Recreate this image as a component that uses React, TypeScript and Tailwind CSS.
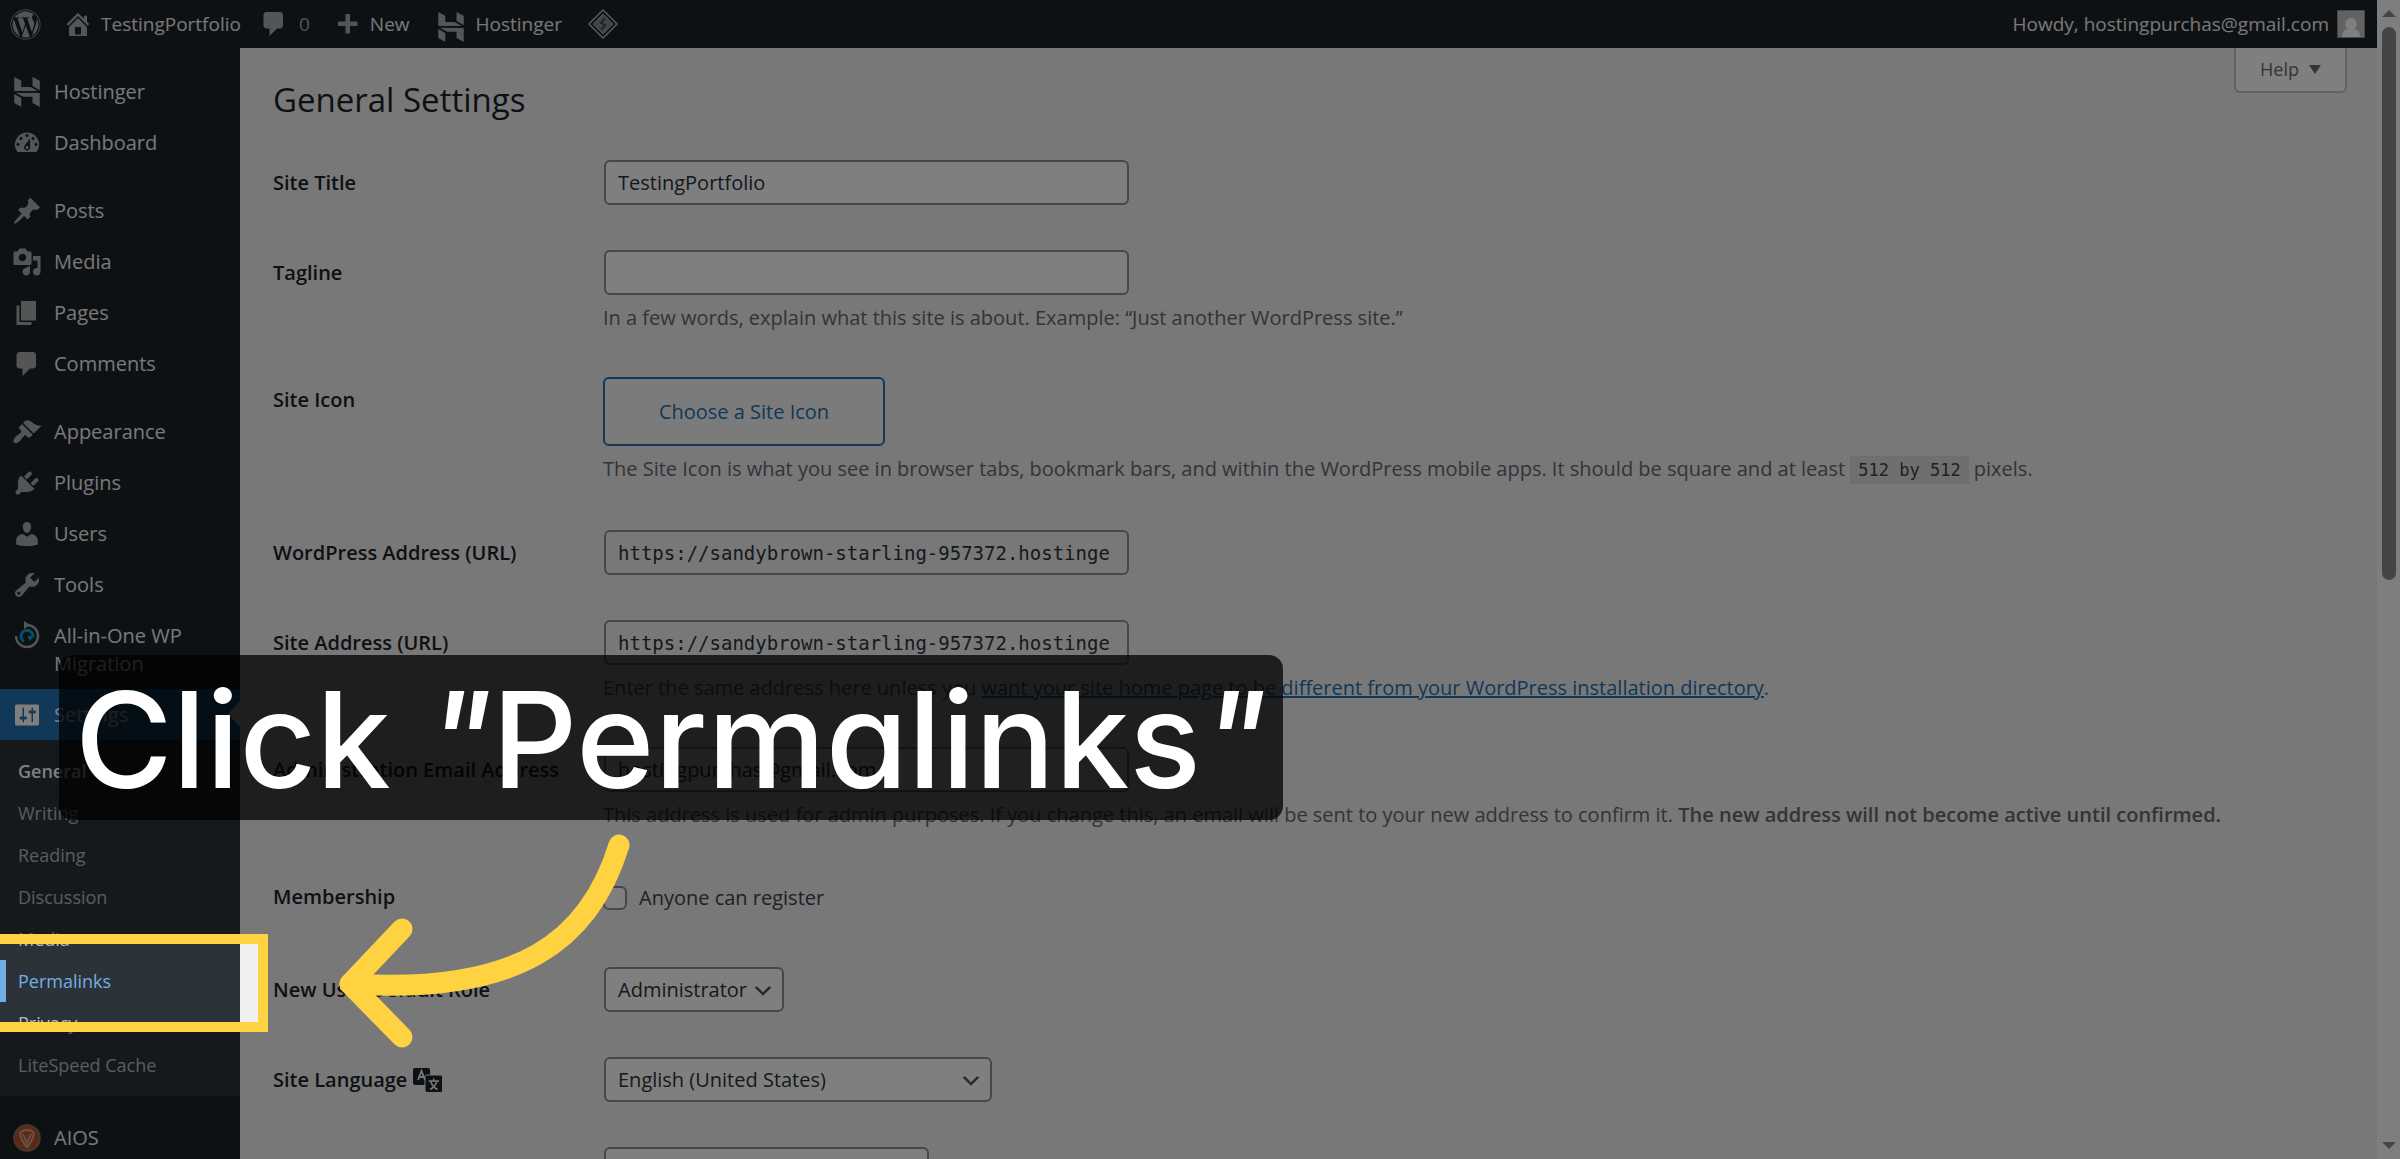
import { useState } from 'react';
import type { ReactNode } from 'react';
import { FaWordpress } from 'react-icons/fa';
import { SiHostinger } from 'react-icons/si';
import clsx from 'clsx';

const SITE_URL = 'https://sandybrown-starling-957372.hostingersite.com';

const dashicons = {
  home: 'M16 8.5l1.53 1.53-1.06 1.06L10 4.6l-6.47 6.49-1.06-1.06L10 2.5l4 4v-2h2v4zm-6-2.46l6 5.99V18H4v-5.97zM12 17v-5H8v5h4z',
  comments: 'M5 2h9q.82 0 1.41.59T16 4v7q0 .82-.59 1.41T14 13h-2l-5 5v-5H5q-.82 0-1.41-.59T3 11V4q0-.82.59-1.41T5 2z',
  plus: 'M17 7v3h-5v5H9v-5H4V7h5V2h3v5h5z',
  dashboard:
    'M3.76 16h12.48A7.998 7.998 0 0 0 10 3a7.998 7.998 0 0 0-6.24 13zM10 4c.55 0 1 .45 1 1s-.45 1-1 1-1-.45-1-1 .45-1 1-1zM6 6c.55 0 1 .45 1 1s-.45 1-1 1-1-.45-1-1 .45-1 1-1zm8 0c.55 0 1 .45 1 1s-.45 1-1 1-1-.45-1-1 .45-1 1-1zm-5.37 5.55L12 7v6c0 1.1-.9 2-2 2s-2-.9-2-2c0-.57.24-1.08.63-1.45zM4 10c.55 0 1 .45 1 1s-.45 1-1 1-1-.45-1-1 .45-1 1-1zm12 0c.55 0 1 .45 1 1s-.45 1-1 1-1-.45-1-1 .45-1 1-1zm-5 3c0-.55-.45-1-1-1s-1 .45-1 1 .45 1 1 1 1-.45 1-1z',
  posts:
    'M10.44 3.02l1.82-1.82 6.36 6.35-1.83 1.82c-1.05-.68-2.48-.57-3.41.36l-.75.75c-.92.93-1.04 2.35-.35 3.41l-1.83 1.82-2.41-2.41-2.8 2.79c-.42.42-3.38 2.71-3.8 2.29s1.86-3.39 2.28-3.81l2.79-2.79L4.1 9.36l1.83-1.82c1.05.69 2.48.57 3.4-.36l.75-.75c.93-.92 1.05-2.35.36-3.41z',
  media:
    'M13 11V4c0-.55-.45-1-1-1h-1.67L9 1H5L3.67 3H2c-.55 0-1 .45-1 1v7c0 .55.45 1 1 1h10c.55 0 1-.45 1-1zM7 4.5c1.38 0 2.5 1.12 2.5 2.5S8.38 9.5 7 9.5 4.5 8.38 4.5 7 5.62 4.5 7 4.5zM14 6h5v10.5c0 1.38-1.12 2.5-2.5 2.5S14 17.88 14 16.5s1.12-2.5 2.5-2.5c.17 0 .34.02.5.05V9h-3V6zm-4 8.05V13h2v3.5c0 1.38-1.12 2.5-2.5 2.5S7 17.88 7 16.5 8.12 14 9.5 14c.17 0 .34.02.5.05z',
  pages: 'M6 15V2h10v13H6zm-1 1h8v2H3V5h2v11z',
  appearance:
    'M14.48 11.06L7.41 3.99l1.5-1.5c.5-.56 2.3-.47 3.51.32 1.21.8 1.43 1.28 2.91 2.1 1.18.64 2.45 1.26 4.45.85zm-.71.71L6.7 4.7 4.93 6.47c-.39.39-.39 1.02 0 1.41l1.06 1.06c.39.39.39 1.03 0 1.42-.6.6-1.43 1.11-2.21 1.69-.35.26-.7.53-1.01.84C1.43 14.23.4 16.08 1.4 17.07c.99 1 2.84-.03 4.18-1.36.31-.31.58-.66.85-1.02.57-.78 1.08-1.61 1.69-2.21.39-.39 1.02-.39 1.41 0l1.06 1.06c.39.39 1.02.39 1.41 0z',
  plugins:
    'M13.11 4.36L9.87 7.6 8 5.73l3.24-3.24c.35-.34 1.05-.2 1.56.32.52.51.66 1.21.31 1.55zm-8 1.77l.91-1.12 9.01 9.01-1.19.84c-.71.71-2.63 1.16-3.82 1.16H6.14L4.9 17.26c-.59.59-1.54.59-2.12 0-.59-.58-.59-1.53 0-2.12l1.24-1.24v-3.88c0-1.13.4-3.19 1.09-3.89zm7.26 3.97l3.24-3.24c.34-.35 1.04-.21 1.55.31.52.51.66 1.21.31 1.55l-3.24 3.25z',
  users:
    'M10 9.25c-2.27 0-2.73-3.44-2.73-3.44C7 4.02 7.82 2 9.97 2c2.16 0 2.98 2.02 2.71 3.81 0 0-.41 3.44-2.68 3.44zm0 2.57L12.72 10c2.39 0 4.52 2.33 4.52 4.53v2.49s-3.65 1.13-7.24 1.13c-3.65 0-7.24-1.13-7.24-1.13v-2.49c0-2.25 1.94-4.48 4.47-4.48z',
  tools:
    'M16.68 9.77c-1.34 1.34-3.3 1.67-4.95.99l-5.41 6.52c-.99.99-2.59.99-3.58 0s-.99-2.59 0-3.57l6.52-5.42c-.68-1.65-.35-3.61.99-4.95 1.28-1.28 3.12-1.62 4.72-1.06l-2.89 2.89 2.82 2.82 2.86-2.87c.53 1.58.18 3.39-1.08 4.65zM3.81 16.21c.4.39 1.04.39 1.43 0 .4-.4.4-1.04 0-1.43-.39-.4-1.03-.4-1.43 0-.39.39-.39 1.03 0 1.43z',
  settings:
    'M18 16V4c0-.55-.45-1-1-1H3c-.55 0-1 .45-1 1v12c0 .55.45 1 1 1h14c.55 0 1-.45 1-1zM8 11h1c.55 0 1 .45 1 1s-.45 1-1 1H8v1.5c0 .28-.22.5-.5.5s-.5-.22-.5-.5V13H6c-.55 0-1-.45-1-1s.45-1 1-1h1V5.5c0-.28.22-.5.5-.5s.5.22.5.5V11zm5-2h-1c-.55 0-1-.45-1-1s.45-1 1-1h1V5.5c0-.28.22-.5.5-.5s.5.22.5.5V7h1c.55 0 1 .45 1 1s-.45 1-1 1h-1v5.5c0 .28-.22.5-.5.5s-.5-.22-.5-.5V9z',
};

type DashiconName = keyof typeof dashicons;

function Dashicon({ name, className }: { name: DashiconName; className?: string }) {
  return (
    <svg viewBox="0 0 20 20" aria-hidden="true" className={clsx('size-[30px] shrink-0 fill-current', className)}>
      <path d={dashicons[name]} />
    </svg>
  );
}

function MigrationIcon() {
  return (
    <svg viewBox="0 0 30 30" aria-hidden="true" className="size-[30px] shrink-0" fill="none" strokeWidth="2.4">
      <path d="M15 4a11 11 0 1 1-11 11" stroke="#a7aaad" />
      <path d="M12 0l6 4-6 4z" fill="#a7aaad" />
      <path d="M12 20.500a6 6 0 1 1 9-5" stroke="#00a0e0" strokeWidth="3" />
      <path d="M15 15h7l-4 5z" fill="#00a0e0" />
    </svg>
  );
}

function AiosIcon() {
  return (
    <svg viewBox="0 0 30 30" aria-hidden="true" className="size-[30px] shrink-0" fill="none">
      <circle cx="15" cy="15" r="13" fill="#b8522a" stroke="#8f7468" strokeWidth="1.500" />
      <path d="M8 10c3-4 11-4 14 0-1 6-3 10-7 14-4-4-6-8-7-14z" stroke="#d0a694" strokeWidth="2" />
      <path d="M11 11l4 9 4-9" stroke="#d0a694" strokeWidth="1.800" />
    </svg>
  );
}

function LiteSpeedIcon() {
  return (
    <svg viewBox="0 0 30 30" aria-hidden="true" className="size-[30px] shrink-0" fill="none" stroke="#a7aaad">
      <path d="M15 1l14 14-14 14L1 15z" strokeWidth="1.600" />
      <path d="M15 5l10 10-10 10L5 15z" fill="#83878b" />
      <path d="M17 9l-4 5 4 2-4 5" stroke="#3a4046" strokeWidth="1.800" />
    </svg>
  );
}

function TranslationIcon() {
  return (
    <svg viewBox="0 0 30 26" aria-hidden="true" className="h-[26px] w-[30px]" fill="none">
      <rect x="0" y="1" width="17" height="17" rx="2" fill="#1d2327" />
      <path d="M5 13l3.500-9 3.500 9M6 10h5" stroke="#f0f0f1" strokeWidth="1.800" />
      <rect x="12" y="8" width="17.500" height="17.500" rx="2" fill="#1d2327" stroke="#f0f0f1" />
      <path d="M15.500 14h10.500M20.700 11.500v2.500M17 22.500c4-2 6-5 7-8.500M24.500 22.500c-4-2-6-5-7-8.500" stroke="#f0f0f1" strokeWidth="1.500" />
    </svg>
  );
}

const menuGroups: { label: string; icon: ReactNode }[][] = [
  [
    { label: 'Hostinger', icon: <SiHostinger className="size-[30px] shrink-0" /> },
    { label: 'Dashboard', icon: <Dashicon name="dashboard" /> },
  ],
  [
    { label: 'Posts', icon: <Dashicon name="posts" /> },
    { label: 'Media', icon: <Dashicon name="media" /> },
    { label: 'Pages', icon: <Dashicon name="pages" /> },
    { label: 'Comments', icon: <Dashicon name="comments" /> },
  ],
  [
    { label: 'Appearance', icon: <Dashicon name="appearance" /> },
    { label: 'Plugins', icon: <Dashicon name="plugins" /> },
    { label: 'Users', icon: <Dashicon name="users" /> },
    { label: 'Tools', icon: <Dashicon name="tools" /> },
    { label: 'All-in-One WP Migration', icon: <MigrationIcon /> },
  ],
];

const settingsPages = ['General', 'Writing', 'Reading', 'Discussion', 'Media', 'Permalinks', 'Privacy', 'LiteSpeed Cache'];

function MenuItem({ label, icon }: { label: string; icon: ReactNode }) {
  return (
    <a href="#" className="flex gap-3 py-[11px] pr-8 pl-3 leading-[28px] text-[#f0f0f1]">
      <span className="-my-px text-[#a7aaad]">{icon}</span>
      <span>{label}</span>
    </a>
  );
}

function AdminBar() {
  return (
    <header className="flex h-12 items-center bg-[#1d2327] pr-3 pl-2.5 text-[19px] text-[#f0f0f1]">
      <a href="#" aria-label="About WordPress"><FaWordpress className="size-[31px] text-[#a7aaad]" /></a>
      <a href="#" className="ml-[22px] flex items-center gap-2">
        <Dashicon name="home" className="text-[#a7aaad]" />
        TestingPortfolio
      </a>
      <a href="#" className="ml-[18px] flex items-center gap-2.5 text-[#a7aaad]">
        <Dashicon name="comments" />
        0
      </a>
      <a href="#" className="ml-[22px] flex items-center gap-2">
        <Dashicon name="plus" className="mt-1 text-[#a7aaad]" />
        New
      </a>
      <a href="#" className="ml-[26px] flex items-center gap-2.5">
        <SiHostinger className="mt-1.5 size-[30px] text-[#a7aaad]" />
        Hostinger
      </a>
      <a href="#" aria-label="LiteSpeed Cache" className="ml-[26px]"><LiteSpeedIcon /></a>
      <a href="#" className="ml-auto flex items-center gap-2">
        Howdy, hostingpurchas@gmail.com
        <svg viewBox="0 0 28 28" aria-hidden="true" className="size-7">
          <path d="M0 0h28v28H0z" fill="#8c8f94" />
          <path d="M1 1h26v26H1z" fill="#c3c4c7" />
          <path d="M14 8a6 6 0 0 1 3 11c4 0 6 3 6 8H5c0-5 2-8 6-8a6 6 0 0 1 3-11z" fill="#fff" />
        </svg>
      </a>
    </header>
  );
}

function Sidebar() {
  return (
    <nav aria-label="Main menu" className="w-60 shrink-0 bg-[#1d2327] pt-[19px]">
      {menuGroups.map((group, index) => (
        <div key={index} className={clsx(index > 0 && 'mt-[17px]')}>
          {group.map((item) => (
            <div key={item.label} className="min-h-[51px]">
              <MenuItem {...item} />
            </div>
          ))}
        </div>
      ))}

      <a href="#" className="relative flex h-[51px] items-center gap-3 bg-[#2271b1] pl-3 text-white">
        <Dashicon name="settings" />
        Settings
        <span className="absolute top-3 right-0 border-y-[13px] border-r-[12px] border-y-transparent border-r-[#f0f0f1]" />
      </a>
      <ul className="bg-[#2c3338] py-2.5 text-[18px] leading-[42px]">
        {settingsPages.map((page) => (
          <li key={page}>
            <a
              href="#"
              className={clsx(
                'block pl-[18px]',
                page === 'General' && 'font-semibold text-white',
                page === 'Permalinks' && 'text-[#72aee6] shadow-[inset_6px_0_0_#72aee6]',
                page !== 'General' && page !== 'Permalinks' && 'text-[#b4b9be]'
              )}
            >
              {page}
            </a>
          </li>
        ))}
      </ul>
      <div className="mt-[17px]">
        <MenuItem label="AIOS" icon={<AiosIcon />} />
      </div>
    </nav>
  );
}

interface FieldRowProps {
  label: string;
  htmlFor: string;
  icon?: ReactNode;
  children: ReactNode;
}

function FieldRow({ label, htmlFor, icon, children }: FieldRowProps) {
  return (
    <div className="flex">
      <label htmlFor={htmlFor} className="flex h-[58px] w-[330px] shrink-0 items-center gap-1.5 pt-[31px] leading-[27px] font-semibold text-[#1d2327]">
        {label}
        {icon}
      </label>
      <div className="pt-[22px] pb-[23px]">{children}</div>
    </div>
  );
}

const fieldClass = 'ml-px block h-[45px] rounded-md border-2 border-[#8c8f94] pl-3 text-[#2c3338]';

function Description({ children }: { children: ReactNode }) {
  return <p className="mt-2 leading-[29px] text-[#646970]">{children}</p>;
}

function SelectBox({ id, value, className }: { id: string; value: string; className: string }) {
  return (
    <div className={clsx('relative', className)}>
      <select id={id} className={clsx(fieldClass, 'w-full appearance-none bg-white')}>
        <option>{value}</option>
      </select>
      <svg viewBox="0 0 20 20" aria-hidden="true" className="pointer-events-none absolute top-3 right-2 size-6 fill-[#50575e]">
        <path d="M5 6l5 5 5-5 2 1-7 7-7-7 2-1z" />
      </svg>
    </div>
  );
}

function UrlInput({ id }: { id: string }) {
  return (
    <input
      id={id}
      readOnly
      value={SITE_URL}
      className={clsx(fieldClass, "w-[525px] bg-transparent pr-[18px] font-['DejaVu_Sans_Mono',monospace] text-[19px]")}
    />
  );
}

function SettingsForm() {
  const [title, setTitle] = useState('TestingPortfolio');
  const [tagline, setTagline] = useState('');
  const [email, setEmail] = useState('hostingpurchas@gmail.com');

  return (
    <form>
      <FieldRow label="Site Title" htmlFor="blogname">
        <input id="blogname" value={title} onChange={(e) => setTitle(e.target.value)} className={clsx(fieldClass, 'w-[525px] bg-white')} />
      </FieldRow>
      <FieldRow label="Tagline" htmlFor="tagline">
        <input id="tagline" value={tagline} onChange={(e) => setTagline(e.target.value)} className={clsx(fieldClass, 'w-[525px] bg-white')} />
        <Description>In a few words, explain what this site is about. Example: “Just another WordPress site.”</Description>
      </FieldRow>
      <FieldRow label="Site Icon" htmlFor="site-icon">
        <button id="site-icon" type="button" className="block h-[69px] w-[282px] rounded-md border-2 border-[#2271b1] bg-[#f6f7f7] text-[#2271b1]">
          Choose a Site Icon
        </button>
        <Description>
          The Site Icon is what you see in browser tabs, bookmark bars, and within the WordPress mobile apps. It should be square and at least{' '}
          <code className="bg-[#dfdfe0] px-2 py-1 font-['DejaVu_Sans_Mono',monospace] text-[17px] text-[#3c434a]">512 by 512</code> pixels.
        </Description>
      </FieldRow>
      <FieldRow label="WordPress Address (URL)" htmlFor="siteurl">
        <UrlInput id="siteurl" />
      </FieldRow>
      <FieldRow label="Site Address (URL)" htmlFor="home">
        <UrlInput id="home" />
        <Description>
          Enter the same address here unless you{' '}
          <a href="#" className="text-[#2271b1] underline">want your site home page to be different from your WordPress installation directory</a>.
        </Description>
      </FieldRow>
      <FieldRow label="Administration Email Address" htmlFor="admin-email">
        <input id="admin-email" type="email" value={email} onChange={(e) => setEmail(e.target.value)} className={clsx(fieldClass, 'w-[525px] bg-white')} />
        <Description>
          This address is used for admin purposes. If you change this, an email will be sent to your new address to confirm it.{' '}
          <strong className="font-semibold">The new address will not become active until confirmed.</strong>
        </Description>
      </FieldRow>
      <FieldRow label="Membership" htmlFor="register">
        <label className="flex h-12 items-center gap-3 text-[#3c434a]">
          <input id="register" type="checkbox" className="size-6 appearance-none rounded-md border-2 border-[#8c8f94] bg-white" />
          Anyone can register
        </label>
      </FieldRow>
      <FieldRow label="New User Default Role" htmlFor="role">
        <SelectBox id="role" value="Administrator" className="w-[180px]" />
      </FieldRow>
      <FieldRow label="Site Language" htmlFor="language" icon={<TranslationIcon />}>
        <SelectBox id="language" value="English (United States)" className="w-[388px]" />
      </FieldRow>
      <FieldRow label="" htmlFor="timezone">
        <SelectBox id="timezone" value="UTC+0" className="w-[325px]" />
      </FieldRow>
    </form>
  );
}

function Scrollbar() {
  return (
    <div className="flex w-[23px] shrink-0 flex-col items-center justify-between bg-[#fcfcfc] pt-2.5 pb-2.5">
      <div>
        <div className="mb-2.5 border-x-[7px] border-b-[7px] border-x-transparent border-b-[#8b8b8b]" />
        <div className="h-[553px] w-3.5 rounded-full bg-[#8b8b8b]" />
      </div>
      <div className="border-x-[7px] border-t-[7px] border-x-transparent border-t-[#8b8b8b]" />
    </div>
  );
}

export default function App() {
  return (
    <div className="relative flex h-screen overflow-hidden bg-[#f0f0f1] font-['Open_Sans',sans-serif] text-[20px]">
      <div className="flex min-w-0 flex-1 flex-col">
        <AdminBar />
        <div className="flex min-h-0 flex-1">
          <Sidebar />
          <main className="relative flex-1 pl-[33px]">
            <button type="button" className="absolute top-0 right-[30px] flex h-[45px] items-center gap-2.5 rounded-b-md border-2 border-t-0 border-[#c3c4c7] bg-white px-6 text-[18px] text-[#646970]">
              Help
              <span className="border-x-[6px] border-t-[9px] border-x-transparent border-t-[#646970]" />
            </button>
            <h1 className="pt-[30px] pb-4 text-[33px] leading-[44px] text-[#1d2327]">General Settings</h1>
            <SettingsForm />
          </main>
        </div>
      </div>
      <Scrollbar />

      {/* Spotlight: the huge shadow dims everything around the box */}
      <div className="absolute top-[934px] -left-2.5 h-[98px] w-[278px] border-10 border-[#ffd242] shadow-[0_0_0_2400px_rgba(0,0,0,0.5)]" />
      <div className="absolute top-[655px] left-[59px] flex h-[165px] items-center rounded-[14px] bg-black/75 px-4 pt-1 font-['Inter',sans-serif] text-[133px] font-medium whitespace-pre text-white [font-feature-settings:'cv11']">
        Click <i>"</i>Permalinks<i>"</i>
      </div>
      <svg viewBox="0 0 320 240" aria-hidden="true" className="absolute top-[818px] left-[320px] h-[240px] w-[320px]" fill="none" stroke="#ffd242" strokeWidth="21" strokeLinecap="round" strokeLinejoin="round">
        <path d="M299 27C270 122 200 177 30 166" />
        <path d="M82 111L30 166l52 53" />
      </svg>
    </div>
  );
}
